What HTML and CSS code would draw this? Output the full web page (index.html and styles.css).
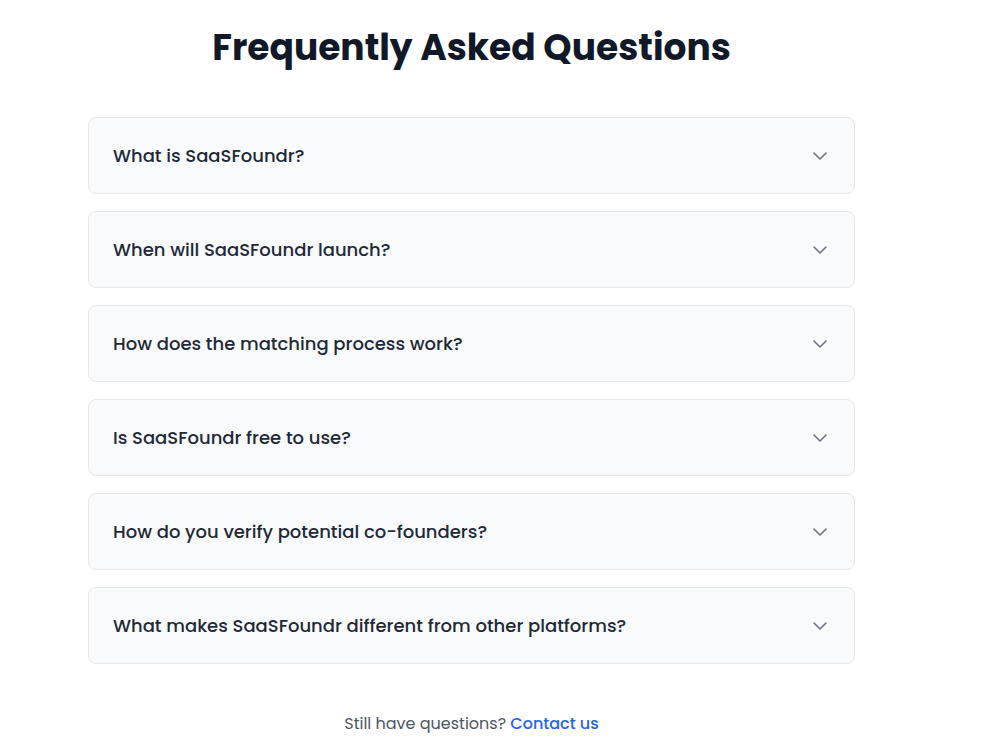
FILE: index.html
```html
<!DOCTYPE html>
<html lang="en">
<head>
    <meta charset="UTF-8">
    <meta name="viewport" content="width=device-width, initial-scale=1.0">
    <title>FAQ - SaaSFoundr</title>
    <link rel="stylesheet" href="styles.css">
</head>
<body>
    <section class="faq">
        <h2 class="faq-title">Frequently Asked Questions</h2>

        <div class="faq-list">
            <div class="faq-item">
                <span class="faq-question">What is SaaSFoundr?</span>
                <svg class="chevron" viewBox="0 0 24 24" fill="none" stroke="currentColor" stroke-width="2" stroke-linecap="round" stroke-linejoin="round"><path d="M6 9l6 6 6-6"/></svg>
            </div>
            <div class="faq-item">
                <span class="faq-question">When will SaaSFoundr launch?</span>
                <svg class="chevron" viewBox="0 0 24 24" fill="none" stroke="currentColor" stroke-width="2" stroke-linecap="round" stroke-linejoin="round"><path d="M6 9l6 6 6-6"/></svg>
            </div>
            <div class="faq-item">
                <span class="faq-question">How does the matching process work?</span>
                <svg class="chevron" viewBox="0 0 24 24" fill="none" stroke="currentColor" stroke-width="2" stroke-linecap="round" stroke-linejoin="round"><path d="M6 9l6 6 6-6"/></svg>
            </div>
            <div class="faq-item">
                <span class="faq-question">Is SaaSFoundr free to use?</span>
                <svg class="chevron" viewBox="0 0 24 24" fill="none" stroke="currentColor" stroke-width="2" stroke-linecap="round" stroke-linejoin="round"><path d="M6 9l6 6 6-6"/></svg>
            </div>
            <div class="faq-item">
                <span class="faq-question">How do you verify potential co-founders?</span>
                <svg class="chevron" viewBox="0 0 24 24" fill="none" stroke="currentColor" stroke-width="2" stroke-linecap="round" stroke-linejoin="round"><path d="M6 9l6 6 6-6"/></svg>
            </div>
            <div class="faq-item">
                <span class="faq-question">What makes SaaSFoundr different from other platforms?</span>
                <svg class="chevron" viewBox="0 0 24 24" fill="none" stroke="currentColor" stroke-width="2" stroke-linecap="round" stroke-linejoin="round"><path d="M6 9l6 6 6-6"/></svg>
            </div>
        </div>

        <p class="faq-footer">Still have questions? <a href="#contact">Contact us</a></p>
    </section>
</body>
</html>
```

FILE: styles.css
```css
/* General Styles */
body {
    font-family: 'Poppins', 'Inter', 'Noto Sans', sans-serif;
    background-color: #ffffff;
    color: #111827;
    margin: 0;
}

.faq {
    width: 767px;
    margin-left: 88px;
    padding-top: 28px;
}

.faq-title {
    margin: 0 0 49px;
    text-align: center;
    font-size: 36px;
    line-height: 40px;
    font-weight: 700;
    color: #111827;
}

.faq-list {
    display: flex;
    flex-direction: column;
    gap: 17px;
}

.faq-item {
    display: flex;
    align-items: center;
    justify-content: space-between;
    min-height: 77px;
    padding: 0 24px;
    background: #f9fafb;
    border: 1px solid #e5e7eb;
    border-radius: 8px;
    box-sizing: border-box;
}

.faq-question {
    font-size: 18px;
    font-weight: 500;
    color: #1f2937;
}

.chevron {
    width: 24px;
    height: 24px;
    margin-right: -2px;
    color: #6b7280;
    stroke-width: 1.6;
}

.faq-footer {
    margin: 48px 0 0;
    text-align: center;
    font-size: 16px;
    line-height: 24px;
    color: #4b5563;
}

.faq-footer a {
    color: #2563eb;
    font-weight: 500;
    text-decoration: none;
}
```
